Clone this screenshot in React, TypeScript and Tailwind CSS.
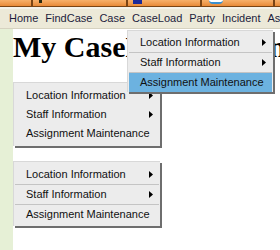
import React from 'react';

type Item = { label: string; sub?: boolean };

const ITEMS: Item[] = [
  { label: 'Location Information', sub: true },
  { label: 'Staff Information', sub: true },
  { label: 'Assignment Maintenance' },
];

const NAV = ['Home', 'FindCase', 'Case', 'CaseLoad', 'Party', 'Incident', 'Assignment'];

const Arrow = () => (
  <svg width="4" height="7" viewBox="0 0 4 7" className="shrink-0">
    <path d="M0 0 L4 3.5 L0 7 Z" fill="#000" />
  </svg>
);

// simple win-xp style menu box
const MenuBox: React.FC<{ rowH: string; lines?: boolean; active?: number; className?: string }> = ({
  rowH,
  lines,
  active,
  className,
}) => (
  <div
    className={`bg-[#ececec] border-t border-l border-[#d8d8d8] shadow-[2px_2px_0_#6e6e6e] p-[1px] ${className ?? ''}`}
  >
    {ITEMS.map((it, i) => (
      <div
        key={it.label}
        className={`flex items-center justify-between pl-[11px] pr-[6px] ${rowH} ${
          lines && i > 0 ? 'border-t border-[#c4c4c4]' : ''
        } ${active === i ? 'bg-[#6cb2e0]' : ''}`}
      >
        <span className="text-[11px] text-[#111]">{it.label}</span>
        {it.sub && <Arrow />}
      </div>
    ))}
  </div>
);

const App: React.FC = () => {
  return (
    <div className="w-[280px] h-[250px] overflow-hidden relative bg-white font-['Liberation_Sans',Arial,sans-serif]">
      {/* orange toolbar */}
      <div className="h-[7px] flex bg-[#ee9a4c] border-b border-[#7a4414]">
        <div className="w-[33px] border-r-2 border-[#7a4414] bg-gradient-to-b from-[#f7b06a] to-[#e88a36]" />
        <div className="w-[95px] border-r-2 border-[#7a4414] bg-gradient-to-b from-[#f7b06a] to-[#e88a36] relative">
          <span className="absolute left-[6px] top-0 w-[3px] h-[3px] bg-[#2a2a10]" />
        </div>
        <div className="w-[74px] border-r-2 border-[#7a4414] bg-gradient-to-b from-[#f7b06a] to-[#e88a36] relative">
          <span className="absolute left-[5px] top-0 w-[9px] h-[4px] bg-[#1a2a9a]" />
        </div>
        <div className="w-[73px] border-r-2 border-[#7a4414] bg-gradient-to-b from-[#f7b06a] to-[#e88a36] relative">
          <span className="absolute left-[7px] top-0 w-[14px] h-[4px] bg-white rounded-b-full border-b-2 border-[#3a90d0]" />
        </div>
        <div className="flex-1 bg-gradient-to-b from-[#f7b06a] to-[#e88a36]" />
      </div>
      <div className="h-[2px] bg-[#f4f2ea]" />

      {/* nav bar */}
      <div className="h-[20px] bg-[#ece9d8] border-b border-[#d6d2c0] flex items-center gap-[7px] pl-[9px] whitespace-nowrap">
        {NAV.map((n) => (
          <span key={n} className="text-[11px] text-[#1c1c3c]">
            {n}
          </span>
        ))}
      </div>

      <div className="flex h-full">
        <div className="w-[13px] shrink-0 bg-[#e6f0d6]" />
        <div className="flex-1 min-w-0">
          <h1 className="font-['Liberation_Serif','Times_New_Roman',serif] font-bold text-[30px] leading-[34px] text-black mt-[1px] whitespace-nowrap">
            My CaseLoad Screen
          </h1>
          <MenuBox rowH="h-[19px]" className="w-[147px] mt-[18px] py-[3px]" />
          <MenuBox rowH="h-[20px]" lines className="w-[147px] mt-[15px] py-[2px]" />
        </div>
      </div>

      {/* open dropdown from nav */}
      <MenuBox
        rowH="h-[20px]"
        lines
        active={2}
        className="absolute left-[127px] top-[30px] w-[146px] pt-[1px] pb-0"
      />
    </div>
  );
};

export default App;
